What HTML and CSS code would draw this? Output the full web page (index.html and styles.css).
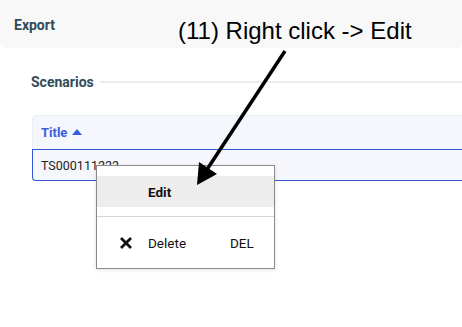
FILE: index.html
```html
<!DOCTYPE html>
<html>
<head>
<meta charset="utf-8">
<link rel="stylesheet" href="styles.css">
</head>
<body>
<div class="page">
  <header class="topbar"><span class="title">Export</span></header>
  <section class="section">
    <div class="legend"><span class="legend-text">Scenarios</span><span class="legend-line"></span></div>
    <div class="table">
      <div class="thead"><span class="th">Title</span><svg class="sort" width="10" height="6" viewBox="0 0 10 6"><polygon points="5,0 10,6 0,6" fill="#3a5ddc"/></svg></div>
      <div class="row">TS000111222</div>
    </div>
  </section>
  <div class="menu">
    <div class="menu-item active"><span class="mi-icon"></span><span class="mi-label">Edit</span><span class="mi-key"></span></div>
    <div class="menu-sep"></div>
    <div class="menu-item"><span class="mi-icon">
      <svg width="12" height="12" viewBox="0 0 12 12"><path d="M2 2 L10 10 M10 2 L2 10" stroke="#111" stroke-width="2.8" stroke-linecap="square"/></svg>
    </span><span class="mi-label">Delete</span><span class="mi-key">DEL</span></div>
  </div>
  <div class="note">(11) Right click -&gt; Edit</div>
  <svg class="arrow" width="462" height="327" viewBox="0 0 462 327">
    <line x1="285" y1="51" x2="206" y2="171" stroke="#000" stroke-width="3.5"/>
    <polygon points="197,185 199,162 217,174" fill="#000"/>
  </svg>
</div>
</body>
</html>
```
FILE: styles.css
```css
html, body {
  margin: 0;
  padding: 0;
  background: #fff;
  overflow: hidden;
}
.page {
  position: relative;
  width: 462px;
  height: 327px;
  overflow: hidden;
  font-family: Roboto, "Noto Sans", sans-serif;
}
.topbar {
  height: 48px;
  background: #f8f8f8;
  border-radius: 0 0 5px 5px;
  display: flex;
  align-items: center;
  padding: 1px 0 0 14px;
  box-sizing: border-box;
}
.title {
  font-weight: 700;
  font-size: 14px;
  color: #2f4b5b;
}
.section {
  padding: 24px 0 0 31px;
}
.legend {
  display: flex;
  align-items: center;
  height: 20px;
}
.legend-text {
  font-weight: 700;
  font-size: 14px;
  color: #2f4b5b;
}
.legend-line {
  flex: 1;
  height: 2px;
  background: #ececec;
  margin-left: 6px;
  margin-top: -1px;
}
.table {
  margin-top: 23px;
  width: 480px;
  margin-left: 1px;
}
.thead {
  background: #f4f8fd;
  border-top: 1px solid #e9eef4;
  border-left: 1px solid #e9eef4;
  border-radius: 4px 0 0 0;
  display: flex;
  align-items: center;
  padding-left: 8px;
  box-sizing: border-box;
  height: 34px;
  color: #3a5ddc;
  font-weight: 700;
  font-size: 13px;
}
.sort {
  margin-left: 5px;
  margin-top: -1px;
}
.row {
  height: 32px;
  box-sizing: border-box;
  border: 1px solid #3455d6;
  border-right: none;
  border-radius: 0 0 0 4px;
  background: #f6f7fc;
  display: flex;
  align-items: center;
  padding-left: 8px;
  font-size: 12.5px;
  color: #222;
}
.menu {
  position: absolute;
  left: 96px;
  top: 165px;
  width: 179px;
  height: 104px;
  box-sizing: border-box;
  background: #fff;
  border: 1px solid #8a8a8a;
  box-shadow: 0 1px 4px rgba(0,0,0,0.12);
  padding-top: 10px;
  font-size: 13.5px;
  color: #111;
}
.menu-item {
  height: 31px;
  display: flex;
  align-items: center;
}
.menu-item.active {
  background: #ededed;
  font-weight: 700;
}
.mi-icon {
  width: 51px;
  display: flex;
  justify-content: flex-end;
  box-sizing: border-box;
}
.mi-icon svg {
  margin-right: 16px;
}
.mi-label {
  width: 82px;
}
.mi-key {
  flex: 1;
}
.menu-sep {
  height: 1px;
  background: #d6d6d6;
  margin: 9px 0 10px;
}
.note {
  position: absolute;
  left: 178px;
  top: 17px;
  font-family: "Liberation Sans", Arial, sans-serif;
  font-size: 24px;
  color: #000;
  white-space: nowrap;
}
.arrow {
  position: absolute;
  left: 0;
  top: 0;
}
```
